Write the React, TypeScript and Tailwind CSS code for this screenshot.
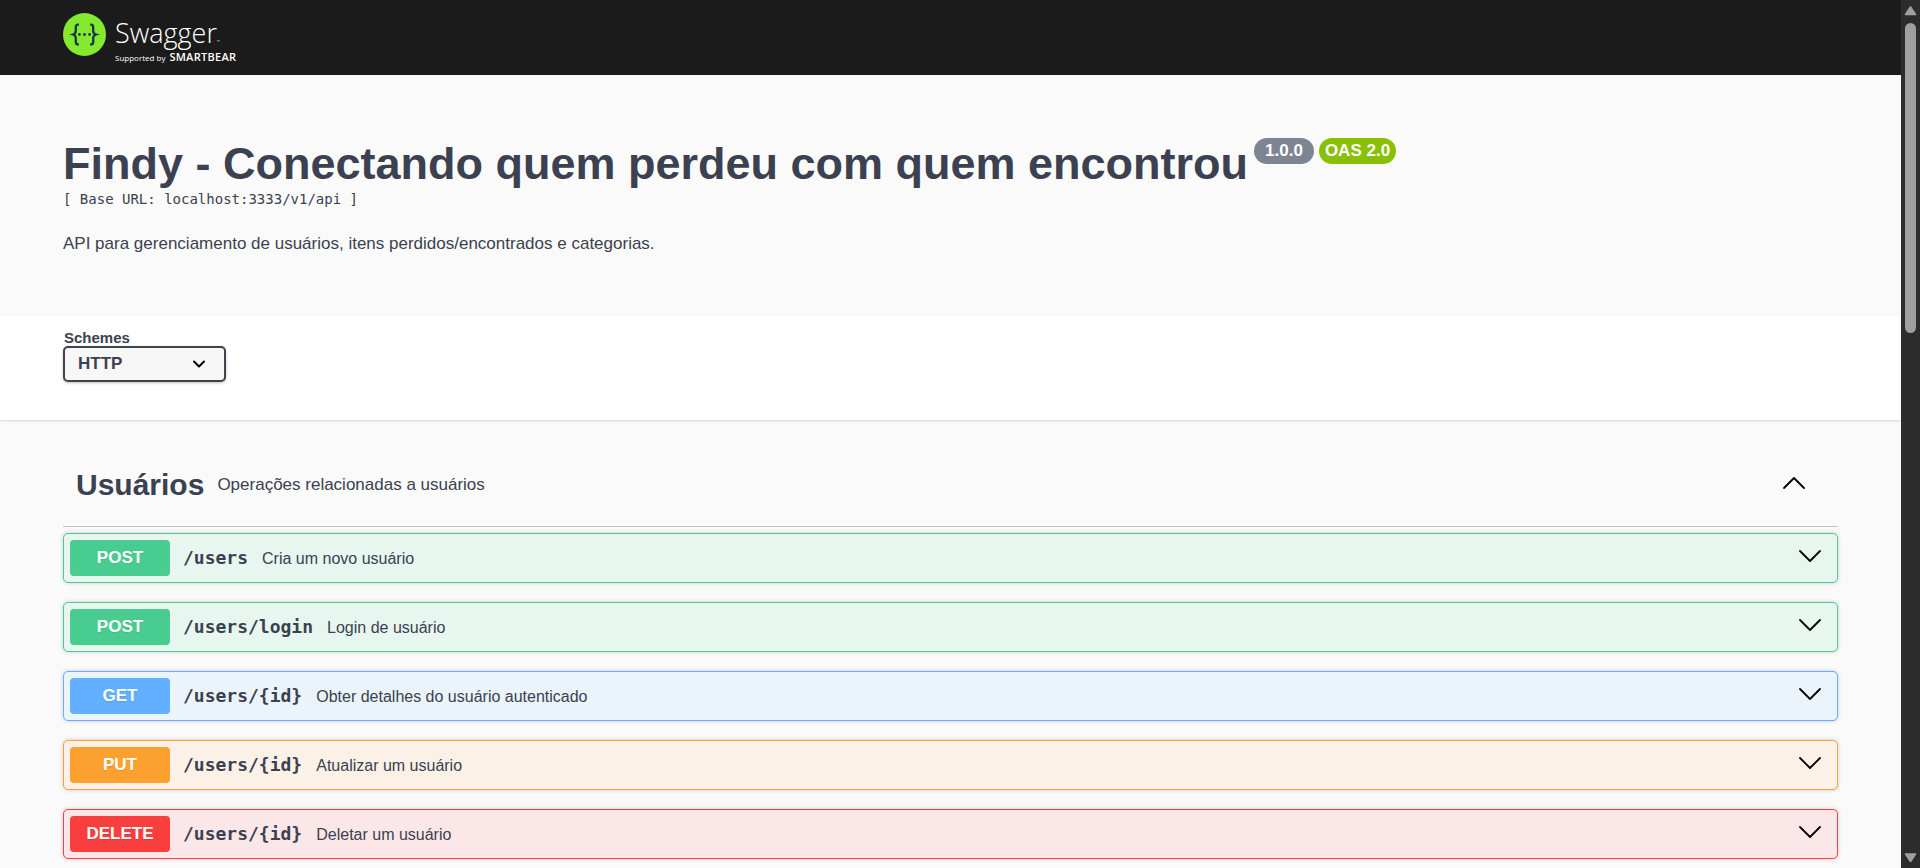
import React from "react";

type Method = "POST" | "GET" | "PUT" | "DELETE";

interface Operation {
  method: Method;
  path: string;
  summary: string;
}

const operations: Operation[] = [
  { method: "POST", path: "/users", summary: "Cria um novo usuário" },
  { method: "POST", path: "/users/login", summary: "Login de usuário" },
  { method: "GET", path: "/users/{id}", summary: "Obter detalhes do usuário autenticado" },
  { method: "PUT", path: "/users/{id}", summary: "Atualizar um usuário" },
  { method: "DELETE", path: "/users/{id}", summary: "Deletar um usuário" },
];

const rowStyles: Record<Method, string> = {
  POST: "border-[#49cc90] bg-[#e7f6ef]",
  GET: "border-[#61affe] bg-[#ebf3fb]",
  PUT: "border-[#fca130] bg-[#fbf1e6]",
  DELETE: "border-[#f93e3e] bg-[#fbe7e7]",
};

const badgeStyles: Record<Method, string> = {
  POST: "bg-[#49cc90]",
  GET: "bg-[#61affe]",
  PUT: "bg-[#fca130]",
  DELETE: "bg-[#f93e3e]",
};

function Chevron({ up = false }: { up?: boolean }) {
  return (
    <svg width="24" height="24" viewBox="0 0 24 24" fill="none" stroke="#000" strokeWidth="1.8" strokeLinecap="round" strokeLinejoin="round" aria-hidden="true">
      <path d={up ? "M2 17 12 7 22 17" : "M2 7 12 17 22 7"} />
    </svg>
  );
}

function Logo() {
  return (
    <a href="#" className="flex items-start gap-[9px]" aria-label="Swagger">
      <svg width="43" height="43" viewBox="0 0 43 43" className="shrink-0" aria-hidden="true">
        <circle cx="21.5" cy="21.5" r="21.5" fill="#85ea2d" />
        <g fill="none" stroke="#173647" strokeWidth="2.3">
          <path d="M15.9 11.6h-.8c-1.6 0-2.3.9-2.3 2.5v3.6c0 2-.8 3.2-2.8 3.8 2 .6 2.8 1.8 2.8 3.8v3.6c0 1.6.7 2.5 2.3 2.5h.8" />
          <path d="M27.1 11.6h.8c1.6 0 2.3.9 2.3 2.5v3.6c0 2 .8 3.2 2.8 3.8-2 .6-2.8 1.8-2.8 3.8v3.6c0 1.6-.7 2.5-2.3 2.5h-.8" />
        </g>
        <g fill="#173647">
          <circle cx="16.4" cy="21.5" r="1.4" />
          <circle cx="21.5" cy="21.5" r="1.4" />
          <circle cx="26.6" cy="21.5" r="1.4" />
        </g>
      </svg>
      <span className="flex flex-col font-['Open_Sans',sans-serif] text-white">
        <span className="flex items-baseline text-[27px] leading-[40px] font-light">
          Swagger<span className="text-[4px] leading-none">™</span>
        </span>
        <span className="flex items-baseline gap-1 leading-[8px]">
          <span className="text-[8px]">Supported by</span>
          <span className="text-[11px] font-semibold tracking-wide">SMARTBEAR</span>
        </span>
      </span>
    </a>
  );
}

function OperationRow({ method, path, summary }: Operation) {
  return (
    <button
      type="button"
      className={`flex h-[50px] w-full items-center rounded-[5px] border pr-[15px] pl-1.5 text-left shadow-[0_0_4px_rgba(0,0,0,0.19)] ${rowStyles[method]}`}
    >
      <span
        className={`flex h-9 w-[100px] items-center justify-center rounded-[4px] pb-px text-[17px] leading-none font-bold text-white [text-shadow:0_1px_0_rgba(0,0,0,0.1)] ${badgeStyles[method]}`}
      >
        {method}
      </span>
      <span className="flex flex-1 items-baseline gap-[14px] pb-0.5 pl-[13px]">
        <span className="font-['DejaVu_Sans_Mono',monospace] text-[18px] font-bold">{path}</span>
        <span className="text-[16px]">{summary}</span>
      </span>
      <span className="pb-1">
        <Chevron />
      </span>
    </button>
  );
}

function Scrollbar() {
  return (
    <div className="flex w-[19px] shrink-0 flex-col items-center bg-[#2c2c2c] py-[5px]" aria-hidden="true">
      <svg width="13" height="11" viewBox="0 0 13 11">
        <path d="M6.5 2 11.5 9.5h-10z" fill="#9f9f9f" stroke="#9f9f9f" strokeWidth="1.6" strokeLinejoin="round" />
      </svg>
      <div className="flex flex-1 pt-[7px]">
        <div className="h-[37.4%] w-[11px] rounded-full bg-[#9f9f9f]" />
      </div>
      <svg width="13" height="11" viewBox="0 0 13 11">
        <path d="M6.5 9.5 11.5 2h-10z" fill="#9f9f9f" stroke="#9f9f9f" strokeWidth="1.6" strokeLinejoin="round" />
      </svg>
    </div>
  );
}

export default function App() {
  return (
    <div className="flex h-screen bg-[#fafafa] font-['Liberation_Sans',Arial,sans-serif] text-[#3b4151]">
      <div className="min-w-0 flex-1 overflow-hidden">
        <header className="bg-[#1b1b1b]">
          <div className="mx-auto h-[75px] max-w-[1825px] px-[25px] pt-[13px]">
            <Logo />
          </div>
        </header>

        <section className="mx-auto max-w-[1825px] px-[25px] pt-[63px] pb-[62px]">
          <div className="flex items-start gap-[6px]">
            <h1 className="text-[45px] leading-[52px] font-bold">Findy - Conectando quem perdeu com quem encontrou</h1>
            <div className="flex gap-[5px] text-[17px] font-bold text-white">
              <span className="h-[26px] rounded-full bg-[#7d8492] px-[11px] leading-[25px]">1.0.0</span>
              <span className="h-[26px] rounded-full bg-[#89bf04] px-1.5 leading-[25px]">OAS 2.0</span>
            </div>
          </div>
          <p className="font-['DejaVu_Sans_Mono',monospace] text-[14px] leading-[18px]">[ Base URL: localhost:3333/v1/api ]</p>
          <p className="pt-[26px] text-[17px] leading-5">API para gerenciamento de usuários, itens perdidos/encontrados e categorias.</p>
        </section>

        <section className="bg-white shadow-[0_1px_2px_rgba(0,0,0,0.15)]">
          <div className="mx-auto flex h-[104px] max-w-[1825px] flex-col items-start px-[25px] pt-[13px]">
            <label htmlFor="schemes" className="pl-px text-[15px] leading-[17px] font-bold">
              Schemes
            </label>
            <div className="grid items-center">
              <select
                id="schemes"
                className="col-start-1 row-start-1 h-9 w-[163px] appearance-none rounded-[5px] border-2 border-[#41444e] bg-[#f7f7f7] pr-10 pl-[13px] text-[17px] leading-5 font-bold shadow-[0_1px_3px_rgba(0,0,0,0.25)]"
              >
                <option>HTTP</option>
                <option>HTTPS</option>
              </select>
              <svg width="14" height="10" viewBox="0 0 14 10" className="pointer-events-none col-start-1 row-start-1 mr-5 justify-self-end" fill="none" stroke="#000" strokeWidth="2" strokeLinecap="round" strokeLinejoin="round" aria-hidden="true">
                <path d="M2 2.5 7 7.5 12 2.5" />
              </svg>
            </div>
          </div>
        </section>

        <main className="mx-auto max-w-[1825px] px-[25px] pt-[32px]">
          <h2 className="border-b border-[#3b4151]/30">
            <button type="button" className="flex h-[74px] w-full items-center px-[13px] pr-8 pb-3 text-left">
              <span className="flex flex-1 items-center gap-[13px] pt-1">
                <span className="text-[30px] leading-9 font-bold">Usuários</span>
                <span className="text-[17px] leading-6">Operações relacionadas a usuários</span>
              </span>
              <Chevron up />
            </button>
          </h2>
          <div className="flex flex-col gap-[19px] pt-1.5">
            {operations.map((op) => (
              <OperationRow key={op.method + op.path} {...op} />
            ))}
          </div>
        </main>
      </div>
      <Scrollbar />
    </div>
  );
}
